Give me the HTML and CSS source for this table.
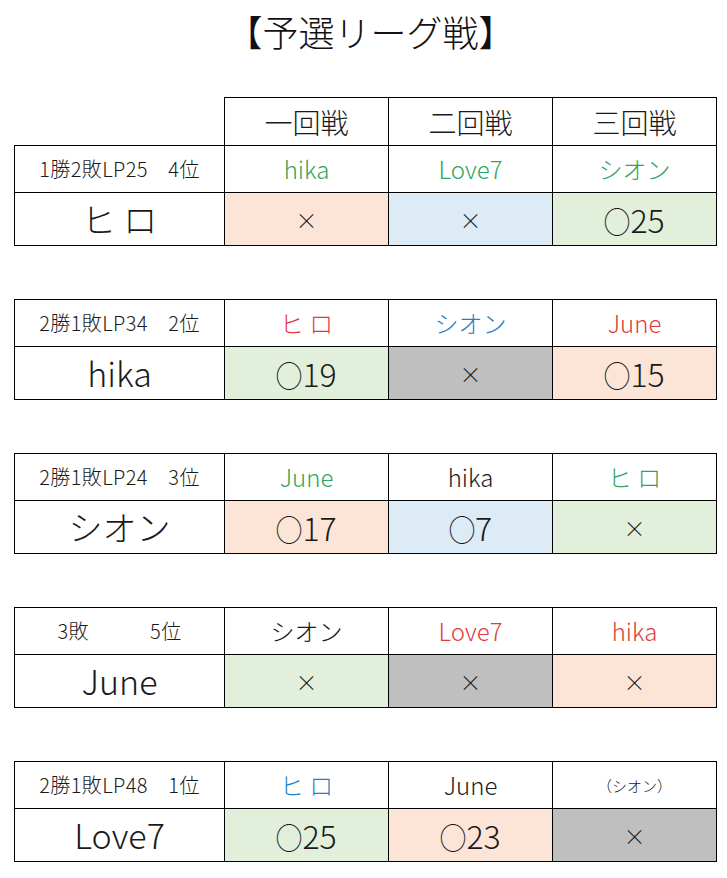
FILE: index.html
```html
<!DOCTYPE html>
<html lang="ja">
<head>
<meta charset="utf-8">
<title>予選リーグ戦</title>
<link rel="stylesheet" href="styles.css">
</head>
<body>
<div class="page">
  <h1 class="title">【予選リーグ戦】</h1>

  <table class="league first">
    <colgroup><col class="c-name"><col class="c-res"><col class="c-res"><col class="c-res"></colgroup>
    <tr class="head">
      <td class="blank"></td>
      <td>一回戦</td>
      <td>二回戦</td>
      <td>三回戦</td>
    </tr>
    <tr class="opp">
      <td class="stat">1勝2敗LP25　4位</td>
      <td class="green">hika</td>
      <td class="green">Love7</td>
      <td class="green">シオン</td>
    </tr>
    <tr class="res">
      <td class="name">ヒ ロ</td>
      <td class="f-pink"><span class="batsu">×</span></td>
      <td class="f-blue"><span class="batsu">×</span></td>
      <td class="f-green"><span class="maru">○</span>25</td>
    </tr>
  </table>

  <table class="league">
    <colgroup><col class="c-name"><col class="c-res"><col class="c-res"><col class="c-res"></colgroup>
    <tr class="opp">
      <td class="stat">2勝1敗LP34　2位</td>
      <td class="red">ヒ ロ</td>
      <td class="blue">シオン</td>
      <td class="red">June</td>
    </tr>
    <tr class="res">
      <td class="name">hika</td>
      <td class="f-green"><span class="maru">○</span>19</td>
      <td class="f-gray"><span class="batsu">×</span></td>
      <td class="f-pink"><span class="maru">○</span>15</td>
    </tr>
  </table>

  <table class="league">
    <colgroup><col class="c-name"><col class="c-res"><col class="c-res"><col class="c-res"></colgroup>
    <tr class="opp">
      <td class="stat">2勝1敗LP24　3位</td>
      <td class="green">June</td>
      <td>hika</td>
      <td class="green">ヒ ロ</td>
    </tr>
    <tr class="res">
      <td class="name">シオン</td>
      <td class="f-pink"><span class="maru">○</span>17</td>
      <td class="f-blue"><span class="maru">○</span>7</td>
      <td class="f-green"><span class="batsu">×</span></td>
    </tr>
  </table>

  <table class="league">
    <colgroup><col class="c-name"><col class="c-res"><col class="c-res"><col class="c-res"></colgroup>
    <tr class="opp">
      <td class="stat">3敗　　　5位</td>
      <td>シオン</td>
      <td class="red">Love7</td>
      <td class="red">hika</td>
    </tr>
    <tr class="res">
      <td class="name">June</td>
      <td class="f-green"><span class="batsu">×</span></td>
      <td class="f-gray"><span class="batsu">×</span></td>
      <td class="f-pink"><span class="batsu">×</span></td>
    </tr>
  </table>

  <table class="league">
    <colgroup><col class="c-name"><col class="c-res"><col class="c-res"><col class="c-res"></colgroup>
    <tr class="opp">
      <td class="stat">2勝1敗LP48　1位</td>
      <td class="blue">ヒ ロ</td>
      <td>June</td>
      <td class="small">（シオン）</td>
    </tr>
    <tr class="res">
      <td class="name">Love7</td>
      <td class="f-green"><span class="maru">○</span>25</td>
      <td class="f-pink"><span class="maru">○</span>23</td>
      <td class="f-gray"><span class="batsu">×</span></td>
    </tr>
  </table>
</div>
</body>
</html>
```

FILE: styles.css
```css
html, body {
  margin: 0;
  padding: 0;
  background: #ffffff;
}

body {
  font-family: "Noto Sans CJK JP", "Noto Sans", sans-serif;
  font-weight: 300;
  color: #1a1a1a;
}

.page {
  display: flex;
  flex-direction: column;
  gap: 53px;
  padding: 0 0 0 14px;
}

.title {
  margin: 0 0 -53px 0;
  height: 97px;
  box-sizing: border-box;
  padding-top: 6px;
  font-size: 36px;
  line-height: 50px;
  font-weight: 300;
  text-align: center;
  letter-spacing: 0;
  color: #111;
}

.league {
  border-collapse: collapse;
  table-layout: fixed;
  width: 703px;
}

.c-name { width: 210px; }
.c-res { width: 164px; }

.league td {
  border: 1.5px solid #000;
  text-align: center;
  vertical-align: middle;
  padding: 0;
  white-space: nowrap;
}

.league td.blank {
  border: none;
  border-bottom: 1.5px solid #000;
}

.head td {
  height: 47px;
  font-size: 28px;
  line-height: 1;
}

.opp td {
  height: 46px;
  font-size: 24px;
  line-height: 1;
}

.opp td.stat {
  font-size: 20px;
  letter-spacing: 0.4px;
}

.opp td.small {
  font-size: 15px;
}

.res td {
  height: 52px;
  font-size: 32px;
  line-height: 1;
}

.res td.name {
  font-size: 34px;
}

.maru {
  display: inline-block;
  font-size: 30px;
  transform: scaleX(0.9);
  margin: 0 -2px 0 -2px;
  font-weight: 300;
}

.batsu {
  display: block;
  font-size: 22px;
  line-height: 1;
  font-weight: 300;
}

.green { color: #2fa45c; }
.red { color: #e23a3a; }
.blue { color: #2a7fc0; }

.f-pink { background: #fce4d6; }
.f-blue { background: #ddebf7; }
.f-green { background: #e2efda; }
.f-gray { background: #bfbfbf; }
```
